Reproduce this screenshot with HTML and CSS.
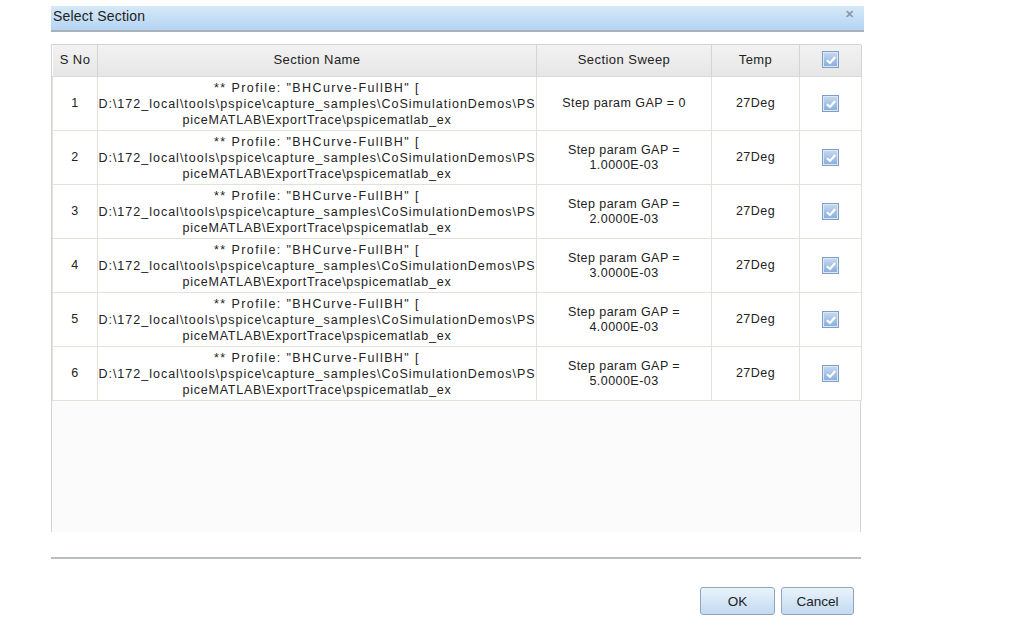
FILE: index.html
```html
<!DOCTYPE html>
<html>
<head>
<meta charset="utf-8">
<link rel="stylesheet" href="styles.css">
</head>
<body>
<div class="dialog">
  <div class="titlebar">
    <span class="title">Select Section</span>
    <span class="close">&#x2715;</span>
  </div>
  <div class="grid">
    <table class="tbl">
      <colgroup>
        <col class="c-no"><col class="c-name"><col class="c-sweep"><col class="c-temp"><col class="c-cb">
      </colgroup>
      <thead>
        <tr>
          <th>S No</th><th>Section Name</th><th>Section Sweep</th><th>Temp</th>
          <th><span class="cb"><svg viewBox="0 0 16 16" width="16" height="16"><path d="M4 8.2 L7 11 L12.2 5" fill="none" stroke="#fff" stroke-width="2.2"/></svg></span></th>
        </tr>
      </thead>
      <tbody>
        <tr>
          <td>1</td>
          <td class="name"><div class="l1">** Profile: "BHCurve-FullBH" [</div><div class="l2">D:\172_local\tools\pspice\capture_samples\CoSimulationDemos\PS</div><div class="l3">piceMATLAB\ExportTrace\pspicematlab_ex</div></td>
          <td>Step param GAP = 0</td><td>27Deg</td>
          <td><span class="cb"><svg viewBox="0 0 16 16" width="16" height="16"><path d="M4 8.2 L7 11 L12.2 5" fill="none" stroke="#fff" stroke-width="2.2"/></svg></span></td>
        </tr>
        <tr>
          <td>2</td>
          <td class="name"><div class="l1">** Profile: "BHCurve-FullBH" [</div><div class="l2">D:\172_local\tools\pspice\capture_samples\CoSimulationDemos\PS</div><div class="l3">piceMATLAB\ExportTrace\pspicematlab_ex</div></td>
          <td>Step param GAP =<br>1.0000E-03</td><td>27Deg</td>
          <td><span class="cb"><svg viewBox="0 0 16 16" width="16" height="16"><path d="M4 8.2 L7 11 L12.2 5" fill="none" stroke="#fff" stroke-width="2.2"/></svg></span></td>
        </tr>
        <tr>
          <td>3</td>
          <td class="name"><div class="l1">** Profile: "BHCurve-FullBH" [</div><div class="l2">D:\172_local\tools\pspice\capture_samples\CoSimulationDemos\PS</div><div class="l3">piceMATLAB\ExportTrace\pspicematlab_ex</div></td>
          <td>Step param GAP =<br>2.0000E-03</td><td>27Deg</td>
          <td><span class="cb"><svg viewBox="0 0 16 16" width="16" height="16"><path d="M4 8.2 L7 11 L12.2 5" fill="none" stroke="#fff" stroke-width="2.2"/></svg></span></td>
        </tr>
        <tr>
          <td>4</td>
          <td class="name"><div class="l1">** Profile: "BHCurve-FullBH" [</div><div class="l2">D:\172_local\tools\pspice\capture_samples\CoSimulationDemos\PS</div><div class="l3">piceMATLAB\ExportTrace\pspicematlab_ex</div></td>
          <td>Step param GAP =<br>3.0000E-03</td><td>27Deg</td>
          <td><span class="cb"><svg viewBox="0 0 16 16" width="16" height="16"><path d="M4 8.2 L7 11 L12.2 5" fill="none" stroke="#fff" stroke-width="2.2"/></svg></span></td>
        </tr>
        <tr>
          <td>5</td>
          <td class="name"><div class="l1">** Profile: "BHCurve-FullBH" [</div><div class="l2">D:\172_local\tools\pspice\capture_samples\CoSimulationDemos\PS</div><div class="l3">piceMATLAB\ExportTrace\pspicematlab_ex</div></td>
          <td>Step param GAP =<br>4.0000E-03</td><td>27Deg</td>
          <td><span class="cb"><svg viewBox="0 0 16 16" width="16" height="16"><path d="M4 8.2 L7 11 L12.2 5" fill="none" stroke="#fff" stroke-width="2.2"/></svg></span></td>
        </tr>
        <tr>
          <td>6</td>
          <td class="name"><div class="l1">** Profile: "BHCurve-FullBH" [</div><div class="l2">D:\172_local\tools\pspice\capture_samples\CoSimulationDemos\PS</div><div class="l3">piceMATLAB\ExportTrace\pspicematlab_ex</div></td>
          <td>Step param GAP =<br>5.0000E-03</td><td>27Deg</td>
          <td><span class="cb"><svg viewBox="0 0 16 16" width="16" height="16"><path d="M4 8.2 L7 11 L12.2 5" fill="none" stroke="#fff" stroke-width="2.2"/></svg></span></td>
        </tr>
      </tbody>
    </table>
  </div>
  <div class="sep"></div>
  <div class="buttons">
    <button class="btn ok">OK</button>
    <button class="btn cancel">Cancel</button>
  </div>
</div>
</body>
</html>
```

FILE: styles.css
```css
html, body {
  margin: 0;
  padding: 0;
  background: #ffffff;
}
body {
  font-family: "Liberation Sans", Arial, sans-serif;
  color: #1a1a1a;
}
.dialog {
  width: 813px;
  margin-left: 51px;
  padding-top: 6px;
}
.titlebar {
  height: 23px;
  display: flex;
  align-items: center;
  justify-content: space-between;
  background: linear-gradient(#d6e8f9, #b4d5f3);
  border-bottom: 2px solid #a9b2bb;
  padding: 0 10px 1px 2px;
}
.title {
  font-size: 14px;
  color: #222;
  letter-spacing: 0.2px;
  margin-top: -3px;
}
.close {
  font-size: 11px;
  color: #8d98a3;
  font-weight: bold;
  margin-top: -7px;
}
.grid {
  width: 808px;
  height: 487px;
  margin-top: 12px;
  border-left: 1px solid #d3d3d3;
  border-right: 1px solid #d3d3d3;
  border-top: 1px solid #d3d3d3;
  background: #fbfbfb;
}
.tbl {
  width: 809px;
  border-collapse: collapse;
  table-layout: fixed;
  font-size: 12.5px;
  letter-spacing: 0.45px;
  color: #222;
}
.c-no { width: 45px; }
.c-name { width: 439px; }
.c-sweep { width: 175px; }
.c-temp { width: 88px; }
.c-cb { width: 62px; }
.tbl th {
  height: 29px;
  font-weight: normal;
  font-size: 13px;
  background: linear-gradient(#f2f2f2, #e6e6e6);
  border-left: 1px solid #ffffff;
  border-right: 1px solid #d4d4d4;
  border-bottom: 1px solid #d8d8d8;
  padding: 0 0 2px 0;
  color: #222;
}
.tbl td {
  height: 53px;
  padding: 0;
  text-align: center;
  vertical-align: middle;
  background: #ffffff;
  border: 1px solid #e4e0dc;
  line-height: 15px;
}
.tbl td.name {
  white-space: nowrap;
  line-height: 16px;
  overflow: hidden;
}
.l1 { letter-spacing: 1.4px; }
.l2 { letter-spacing: 1px; }
.l3 { letter-spacing: 0.75px; }
.cb {
  display: inline-block;
  width: 17px;
  height: 17px;
  box-sizing: border-box;
  border: 1px solid #7f9ec6;
  background: linear-gradient(#c8dbf0, #85acdc);
  vertical-align: middle;
  box-shadow: inset 0 0 0 1px #dde8f5;
}
.cb svg {
  display: block;
  margin: -0.5px;
}
.sep {
  width: 810px;
  height: 0;
  margin-top: 25px;
  border-top: 2px solid #b9bdc3;
}
.buttons {
  display: flex;
  justify-content: flex-end;
  gap: 6px;
  margin-top: 28px;
  padding-right: 10px;
}
.btn {
  height: 28px;
  border: 1px solid #8ea6bf;
  border-radius: 3px;
  background: linear-gradient(#eaf3fc, #c2daf1);
  font-family: "Liberation Sans", Arial, sans-serif;
  font-size: 13.5px;
  color: #222;
  padding: 0;
}
.ok { width: 75px; }
.cancel { width: 73px; }
```
